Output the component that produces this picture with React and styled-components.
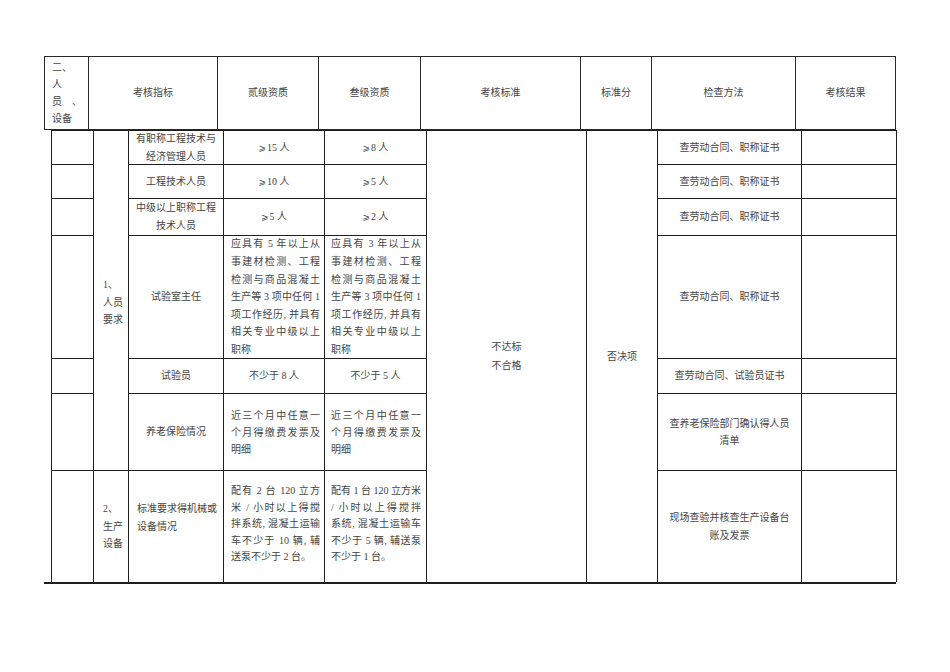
import React from "react";
import styled, { createGlobalStyle } from "styled-components";

const Global = createGlobalStyle`
  html, body { margin: 0; padding: 0; background: #fff; }
  body { font-family: "Liberation Serif", "Noto Sans CJK SC", serif; }
`;

const Page = styled.div`
  padding-top: 56px;
  width: 950px;
  min-height: 672px;
  box-sizing: border-box;
`;

const HeaderGrid = styled.div`
  margin-left: 44px;
  display: grid;
  grid-template-columns: 43px 128px 100px 101px 159px 70px 143px 99px;
  grid-template-rows: 72px;
  gap: 1px;
  padding: 1px;
  background: #2a2a2a;
  width: max-content;
`;

const BodyGrid = styled.div`
  margin-left: 51px;
  display: grid;
  grid-template-columns: 41px 34px 94px 100px 101px 159px 70px 143px 94px;
  grid-template-rows: 33px 33px 36px 122px 34px 76px 111px;
  gap: 1px;
  padding: 1px 1px 0 1px;
  background: #1e1e1e;
  width: max-content;
`;

const BottomRule = styled.div`
  margin-left: 44px;
  width: 852px;
  height: 2px;
  background: #1e1e1e;
`;

const Cell = styled.div`
  background: #fff;
  grid-column: ${(p) => p.$col};
  grid-row: ${(p) => p.$row} / span ${(p) => p.$span || 1};
  display: flex;
  flex-direction: column;
  justify-content: ${(p) => (p.$top ? "flex-start" : "center")};
  align-items: ${(p) => (p.$left ? "flex-start" : "center")};
  text-align: ${(p) => (p.$left ? "left" : "center")};
  padding: ${(p) => p.$pad || "0"};
  font-size: 10px;
  line-height: ${(p) => p.$lh || 18}px;
  color: #444;
  box-sizing: border-box;
  white-space: pre;
  overflow: hidden;
`;

const ParaCell = styled(Cell)`
  align-items: stretch;
  text-align: left;
`;

const Line = styled.span`
  display: block;
  text-align: ${(p) => (p.$justify ? "justify" : "inherit")};
  text-align-last: ${(p) => (p.$justify ? "justify" : "auto")};
  white-space: normal;
`;

const Geq = styled.span`
  font-family: "DejaVu Sans", "Liberation Serif", sans-serif;
  font-size: 9px;
  margin-right: 1px;
`;

const Lines = ({ items }) =>
  items.map((t, i) => <Line key={i}>{t}</Line>);

const Para = ({ items }) =>
  items.map((t, i) => (
    <Line key={i} $justify={i < items.length - 1}>
      {t}
    </Line>
  ));

const AtLeast = ({ n }) => (
  <Line>
    <Geq>⩾</Geq>
    {n} 人
  </Line>
);

const headers = ["考核指标", "贰级资质", "叁级资质", "考核标准", "标准分", "检查方法", "考核结果"];

const rows = [
  {
    name: ["有职称工程技术与", "经济管理人员"],
    a: 15,
    b: 8,
    check: ["查劳动合同、职称证书"],
  },
  { name: ["工程技术人员"], a: 10, b: 5, check: ["查劳动合同、职称证书"] },
  {
    name: ["中级以上职称工程", "技术人员"],
    a: 5,
    b: 2,
    check: ["查劳动合同、职称证书"],
  },
  {
    name: ["试验室主任"],
    para: true,
    lh: 17.6,
    a: ["应具有 5 年以上从", "事建材检测、工程", "检测与商品混凝土", "生产等 3 项中任何 1", "项工作经历, 并具有", "相关专业中级以上", "职称"],
    b: ["应具有 3 年以上从", "事建材检测、工程", "检测与商品混凝土", "生产等 3 项中任何 1", "项工作经历, 并具有", "相关专业中级以上", "职称"],
    check: ["查劳动合同、职称证书"],
  },
  { name: ["试验员"], a: ["不少于 8 人"], b: ["不少于 5 人"], check: ["查劳动合同、试验员证书"] },
  {
    name: ["养老保险情况"],
    para: true,
    lh: 17,
    a: ["近三个月中任意一", "个月得缴费发票及", "明细"],
    b: ["近三个月中任意一", "个月得缴费发票及", "明细"],
    check: ["查养老保险部门确认得人员", "清单"],
  },
];

const Value = ({ v }) => (typeof v === "number" ? <AtLeast n={v} /> : <Lines items={v} />);

export default function App() {
  return (
    <Page>
      <Global />
      <HeaderGrid>
        <Cell $col={1} $row={1} $left $pad="0 0 0 7px" $lh={17}>
          <Lines items={["二、", "人", "员\u3000、", "设备"]} />
        </Cell>
        {headers.map((h, i) => (
          <Cell key={h} $col={i + 2} $row={1}>
            {h}
          </Cell>
        ))}
      </HeaderGrid>

      <BodyGrid>
        {[1, 2, 3, 4, 5, 6, 7].map((r) => (
          <Cell key={"c1-" + r} $col={1} $row={r} />
        ))}

        <Cell $col={2} $row={1} $span={6} $left $pad="4px 0 0 9px" $lh={17.5}>
          <Lines items={["1、", "人员", "要求"]} />
        </Cell>

        {rows.map((r, i) => (
          <React.Fragment key={i}>
            <Cell $col={3} $row={i + 1}>
              <Lines items={r.name} />
            </Cell>
            {r.para ? (
              <>
                <ParaCell $col={4} $row={i + 1} $pad="0 4px 0 7px" $lh={r.lh}>
                  <Para items={r.a} />
                </ParaCell>
                <ParaCell $col={5} $row={i + 1} $pad="0 5px 0 6px" $lh={r.lh}>
                  <Para items={r.b} />
                </ParaCell>
              </>
            ) : (
              <>
                <Cell $col={4} $row={i + 1}>
                  <Value v={r.a} />
                </Cell>
                <Cell $col={5} $row={i + 1}>
                  <Value v={r.b} />
                </Cell>
              </>
            )}
            <Cell $col={8} $row={i + 1} $lh={17.4}>
              <Lines items={r.check} />
            </Cell>
            <Cell $col={9} $row={i + 1} />
          </React.Fragment>
        ))}

        <Cell $col={2} $row={7} $left $pad="0 0 0 9px" $lh={17.5}>
          <Lines items={["2、", "生产", "设备"]} />
        </Cell>
        <Cell $col={3} $row={7} $top $left $pad="29px 0 0 8px" $lh={17.5}>
          <Lines items={["标准要求得机械或", "设备情况"]} />
        </Cell>
        <ParaCell $col={4} $row={7} $top $pad="12px 4px 0 7px" $lh={16.5}>
          <Para items={["配有 2 台 120 立方", "米 / 小时以上得搅", "拌系统, 混凝土运输", "车不少于 10 辆, 辅", "送泵不少于 2 台。"]} />
        </ParaCell>
        <ParaCell $col={5} $row={7} $top $pad="12px 5px 0 6px" $lh={16.5}>
          <Para items={["配有 1 台 120 立方米", "/ 小时以上得搅拌", "系统, 混凝土运输车", "不少于 5 辆, 辅送泵", "不少于 1 台。"]} />
        </ParaCell>
        <Cell $col={8} $row={7} $lh={17.5}>
          <Lines items={["现场查验并核查生产设备台", "账及发票"]} />
        </Cell>
        <Cell $col={9} $row={7} />

        <Cell $col={6} $row={1} $span={7} $lh={18.3}>
          <Lines items={["不达标", "不合格"]} />
        </Cell>
        <Cell $col={7} $row={1} $span={7}>
          否决项
        </Cell>
      </BodyGrid>
      <BottomRule />
    </Page>
  );
}
